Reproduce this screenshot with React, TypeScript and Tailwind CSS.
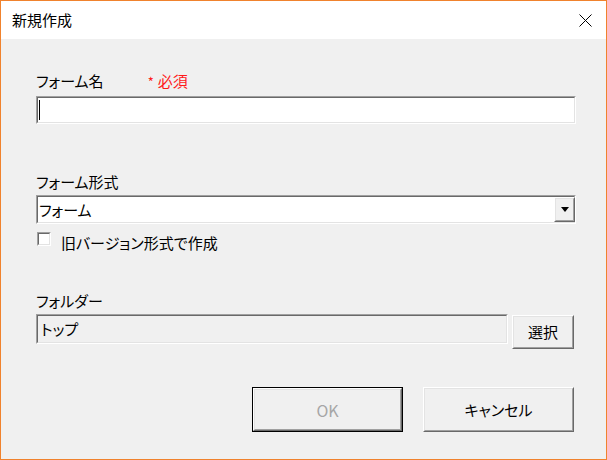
import React from "react";

function Sunken({
  className = "",
  innerClass = "",
  children,
}: {
  className?: string;
  innerClass?: string;
  children?: React.ReactNode;
}) {
  return (
    <div
      className={`border border-t-[#a0a0a0] border-l-[#a0a0a0] border-b-white border-r-white ${className}`}
    >
      <div
        className={`h-full w-full border border-t-[#696969] border-l-[#696969] border-b-[#e3e3e3] border-r-[#e3e3e3] ${innerClass}`}
      >
        {children}
      </div>
    </div>
  );
}

function Raised({
  className = "",
  innerClass = "",
  children,
}: {
  className?: string;
  innerClass?: string;
  children?: React.ReactNode;
}) {
  return (
    <div
      className={`border border-t-white border-l-white border-b-[#696969] border-r-[#696969] ${className}`}
    >
      <div
        className={`h-full w-full border border-t-[#e3e3e3] border-l-[#e3e3e3] border-b-[#a0a0a0] border-r-[#a0a0a0] ${innerClass}`}
      >
        {children}
      </div>
    </div>
  );
}

export default function App() {
  return (
    <div className="w-[607px] h-[460px] border border-[#f0822d] bg-[#f0f0f0] flex flex-col font-['Noto_Sans_CJK_JP',sans-serif] text-[15px] text-black [font-feature-settings:'palt'] overflow-hidden">
      {/* Title bar */}
      <div className="h-[38px] shrink-0 bg-white flex items-center justify-between pl-[11px] pr-[14px]">
        <span className="leading-[20px]">新規作成</span>
        <svg width="13" height="13" viewBox="0 0 13 13" className="mr-0">
          <path d="M0.5 0.5 L12.5 12.5 M12.5 0.5 L0.5 12.5" stroke="#000" strokeWidth="1" fill="none" />
        </svg>
      </div>

      {/* Content */}
      <div className="flex flex-col pl-[35px]">
        {/* Form name */}
        <div className="mt-[32px] h-[20px] leading-[20px] flex">
          <span>フォーム名</span>
          <span className="ml-[44px] text-[#ff1a1a]">
            <span className="text-[13px] mr-[4px]">*</span>必須
          </span>
        </div>
        <Sunken className="mt-[5px] w-[540px] h-[28px] bg-white" innerClass="flex items-center">
          <div className="ml-[1px] w-px h-[20px] bg-black" />
        </Sunken>

        {/* Form type */}
        <div className="mt-[48px] h-[20px] leading-[20px]">フォーム形式</div>
        <Sunken className="mt-[3px] w-[540px] h-[29px] bg-white" innerClass="flex items-stretch">
          <div className="flex-1 flex items-center pl-[1px] leading-[20px]">フォーム</div>
          <Raised className="w-[21px] bg-[#f0f0f0] -mr-px" innerClass="flex items-center justify-center">
            <svg width="8" height="5" viewBox="0 0 8 5">
              <path d="M0 0 H8 L4 5 Z" fill="#000" />
            </svg>
          </Raised>
        </Sunken>

        {/* Checkbox */}
        <div className="mt-[8px] flex items-start">
          <Sunken className="ml-[1px] w-[14px] h-[14px] bg-white" />
          <span className="ml-[10px] mt-[1px] h-[20px] leading-[20px]">旧バージョン形式で作成</span>
        </div>

        {/* Folder */}
        <div className="mt-[38px] h-[20px] leading-[20px]">フォルダー</div>
        <div className="mt-[3px] flex items-start">
          <Sunken className="w-[472px] h-[30px] bg-[#f0f0f0]" innerClass="flex items-center pl-[3px] leading-[20px]">
            トップ
          </Sunken>
          <Raised className="ml-[4px] mt-[1px] w-[62px] h-[34px] bg-[#f0f0f0]" innerClass="flex items-center justify-center leading-[20px]">
            選択
          </Raised>
        </div>

        {/* Buttons */}
        <div className="mt-[38px] flex items-start">
          <div className="ml-[216px] w-[151px] h-[45px] border border-black">
            <Raised className="h-full w-full bg-[#f0f0f0]" innerClass="flex items-center justify-center leading-[20px] text-[#a6a6a6] text-[16px]">
              OK
            </Raised>
          </div>
          <Raised className="ml-[20px] w-[151px] h-[45px] bg-[#f0f0f0]" innerClass="flex items-center justify-center leading-[20px]">
            キャンセル
          </Raised>
        </div>
      </div>
    </div>
  );
}
